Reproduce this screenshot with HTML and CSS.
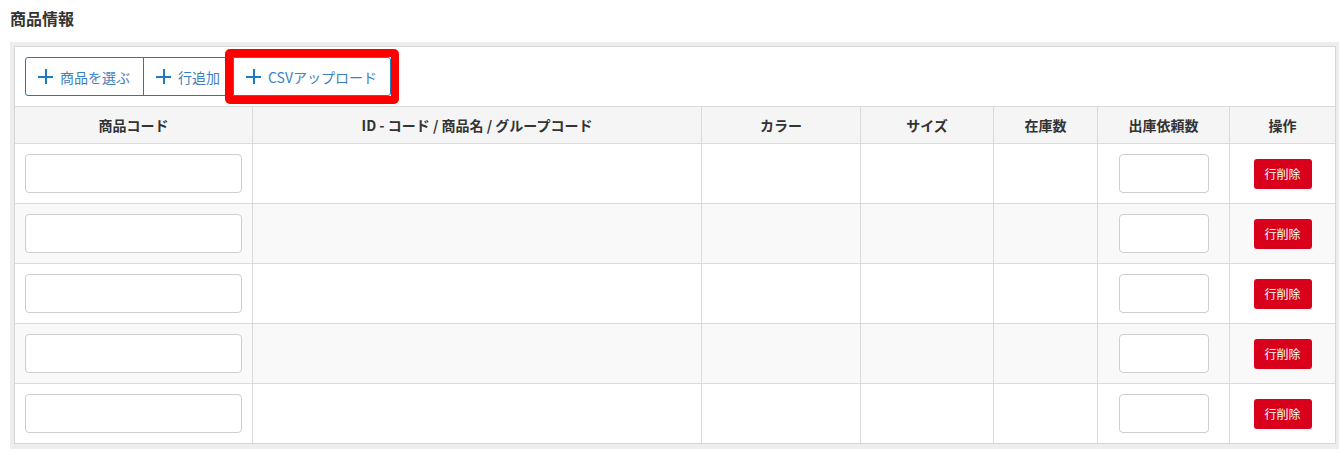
FILE: index.html
```html
<!DOCTYPE html>
<html>
    <head>
        <link rel="stylesheet" href="styles.css">
    </head>
<body>
<h2 class="section-title">商品情報</h2>
<div class="panel">
    <div class="panel-inner">
        <div class="toolbar">
            <div class="btn-group">
                <button class="btn-add"><span class="plus"></span>商品を選ぶ</button>
                <button class="btn-add"><span class="plus"></span>行追加</button>
                <button class="btn-add"><span class="plus"></span>CSVアップロード<span class="mark"></span></button>
            </div>
        </div>
        <table class="items">
            <thead>
                <tr>
                    <th class="c-code">商品コード</th>
                    <th class="c-name">ID - コード / 商品名 / グループコード</th>
                    <th class="c-color">カラー</th>
                    <th class="c-size">サイズ</th>
                    <th class="c-stock">在庫数</th>
                    <th class="c-qty">出庫依頼数</th>
                    <th class="c-op">操作</th>
                </tr>
            </thead>
            <tbody>
                <tr>
                    <td><input type="text" class="input-code"></td>
                    <td></td><td></td><td></td><td></td>
                    <td><input type="text" class="input-qty"></td>
                    <td><button class="btn-delete">行削除</button></td>
                </tr>
                <tr>
                    <td><input type="text" class="input-code"></td>
                    <td></td><td></td><td></td><td></td>
                    <td><input type="text" class="input-qty"></td>
                    <td><button class="btn-delete">行削除</button></td>
                </tr>
                <tr>
                    <td><input type="text" class="input-code"></td>
                    <td></td><td></td><td></td><td></td>
                    <td><input type="text" class="input-qty"></td>
                    <td><button class="btn-delete">行削除</button></td>
                </tr>
                <tr>
                    <td><input type="text" class="input-code"></td>
                    <td></td><td></td><td></td><td></td>
                    <td><input type="text" class="input-qty"></td>
                    <td><button class="btn-delete">行削除</button></td>
                </tr>
                <tr>
                    <td><input type="text" class="input-code"></td>
                    <td></td><td></td><td></td><td></td>
                    <td><input type="text" class="input-qty"></td>
                    <td><button class="btn-delete">行削除</button></td>
                </tr>
            </tbody>
        </table>
    </div>
</div>
</body>
</html>
```

FILE: styles.css
```css
:root {
    --line: #dadada;
    --blue: #1b7cc4;
    --red: #d9001b;
}

body {
    margin: 0;
    padding: 0 1px 0 10px;
    font-family: "Noto Sans CJK JP", "Noto Sans", sans-serif;
    color: #333;
    background: #fff;
}

.section-title {
    margin: 0 0 12px;
    padding-top: 6px;
    font-size: 16px;
    line-height: 24px;
    font-weight: bold;
}

/* Panel */
.panel {
    background: #ededed;
    padding: 4px 3px 5px 4px;
}

.panel-inner {
    background: #fff;
    border: 1px solid #d6d6d6;
}

.toolbar {
    padding: 10px;
}

.btn-group {
    display: inline-flex;
}

.btn-add {
    position: relative;
    display: flex;
    align-items: center;
    gap: 7px;
    height: 39px;
    padding: 0 13px 0 12px;
    margin: 0;
    border: 1px solid var(--blue);
    background: #fff;
    color: #3f80c0;
    font-family: inherit;
    font-size: 14px;
}

.btn-add + .btn-add {
    margin-left: -1px;
}

.btn-add:first-child {
    border-radius: 3px 0 0 3px;
}

.btn-add:last-child {
    border-radius: 0 3px 3px 0;
}

.plus {
    position: relative;
    width: 15px;
    height: 15px;
}

.plus::before,
.plus::after {
    content: '';
    position: absolute;
    background: var(--blue);
}

.plus::before {
    left: 0;
    top: 6.5px;
    width: 15px;
    height: 2px;
}

.plus::after {
    left: 6.5px;
    top: 0;
    width: 2px;
    height: 15px;
}

/* annotation frame */
.mark {
    position: absolute;
    inset: -9px;
    border: 8px solid #ff0000;
    border-radius: 5px;
}

/* Table */
.items {
    width: 100%;
    table-layout: fixed;
    border-collapse: separate;
    border-spacing: 0;
}

.items th,
.items td {
    box-sizing: border-box;
    border-top: 1px solid var(--line);
    border-left: 1px solid var(--line);
    text-align: center;
    vertical-align: middle;
}

.items th:first-child,
.items td:first-child {
    border-left: none;
}

.items th {
    height: 37px;
    padding: 0;
    background: #f5f5f5;
    font-size: 14px;
    font-weight: bold;
    color: #333;
}

.items td {
    height: 60px;
    padding: 10px;
}

.items tbody tr:nth-child(even) td {
    background: #f9f9f9;
}

.c-code { width: 237px; }
.c-name { width: 449px; }
.c-color { width: 159px; }
.c-size { width: 133px; }
.c-stock { width: 104px; }
.c-qty { width: 132px; }

input {
    display: block;
    box-sizing: border-box;
    height: 39px;
    margin: 0 auto;
    border: 1px solid #cfcfcf;
    border-radius: 4px;
    background: #fff;
}

.input-code {
    width: 100%;
}

.input-qty {
    width: 90px;
}

.btn-delete {
    width: 58px;
    height: 30px;
    padding: 0;
    border: none;
    border-radius: 3px;
    background: var(--red);
    color: #fff;
    font-family: inherit;
    font-size: 12px;
}
```
